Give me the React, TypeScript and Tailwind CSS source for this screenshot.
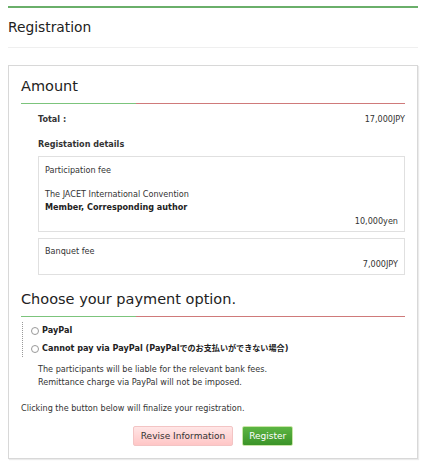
import React from 'react'

const font = { fontFamily: '"DejaVu Sans", Verdana, "Noto Sans CJK JP", sans-serif' }

function Heading({ children }: { children: React.ReactNode }) {
  return (
    <div>
      <h2 className="text-[14.5px] leading-[20px] text-[#222]">{children}</h2>
      <div className="mt-[7px] flex h-[1px]">
        <div className="w-[115px] bg-[#7cc47c]" />
        <div className="flex-1 bg-[#cf7a7a]" />
      </div>
    </div>
  )
}

function Radio({ label }: { label: string }) {
  return (
    <label className="flex items-center gap-[3px] font-bold text-[#222]">
      <span className="inline-block h-[8px] w-[8px] rounded-full border border-[#999] bg-white" />
      {label}
    </label>
  )
}

export default function App() {
  return (
    <div className="min-h-[467px] bg-white px-[8px] pt-[6px] text-[8.1px] leading-[13px] text-[#333]" style={font}>
      <div className="h-[2px] bg-[#6aaf6a]" />
      <div className="flex h-[39px] items-center">
        <h1 className="text-[13.8px] text-[#222]">Registration</h1>
      </div>
      <div className="h-[1px] bg-[#efefef]" />

      <div className="mt-[17px] border border-[#d8d8d8] px-[12px] pb-[12px] pt-[10px] shadow-[1px_1px_1px_rgba(0,0,0,0.08)]">
        <Heading>Amount</Heading>

        <div className="pl-[17px]">
          <div className="mt-[9px] flex justify-between">
            <span className="font-bold">Total :</span>
            <span>17,000JPY</span>
          </div>
          <div className="mt-[12px] font-bold">Registation details</div>

          <div className="mt-[5px] border border-[#e0e0e0] px-[6px] pb-[3px] pt-[7px]">
            <div>Participation fee</div>
            <div className="mt-[11px]">The JACET International Convention</div>
            <div className="font-bold text-[#222]">Member, Corresponding author</div>
            <div className="mt-[1px] text-right">10,000yen</div>
          </div>

          <div className="mt-[6px] border border-[#e0e0e0] px-[6px] pb-[3px] pt-[6px]">
            <div>Banquet fee</div>
            <div className="text-right">7,000JPY</div>
          </div>
        </div>

        <div className="mt-[14px]">
          <Heading>Choose your payment option.</Heading>
        </div>

        <div className="ml-[1px] mt-[5px] flex flex-col gap-[5px] border-l border-dotted border-[#999] py-[2px] pl-[8px]">
          <Radio label="PayPal" />
          <Radio label="Cannot pay via PayPal (PayPalでのお支払いができない場合)" />
        </div>

        <div className="mt-[6px] pl-[17px]">
          <div>The participants will be liable for the relevant bank fees.</div>
          <div>Remittance charge via PayPal will not be imposed.</div>
        </div>

        <div className="mt-[13px]">Clicking the button below will finalize your registration.</div>

        <div className="mt-[11px] flex justify-center gap-[9px]">
          <button className="h-[20px] rounded-[2px] border border-[#f3c4c4] bg-gradient-to-b from-[#ffe6e6] to-[#ffc6c6] px-[7px] text-[9px] text-[#333]">
            Revise Information
          </button>
          <button className="h-[20px] rounded-[2px] border border-[#c9e6a8] bg-gradient-to-b from-[#5cb543] to-[#3b9428] px-[6px] text-[9px] text-white">
            Register
          </button>
        </div>
      </div>
    </div>
  )
}
